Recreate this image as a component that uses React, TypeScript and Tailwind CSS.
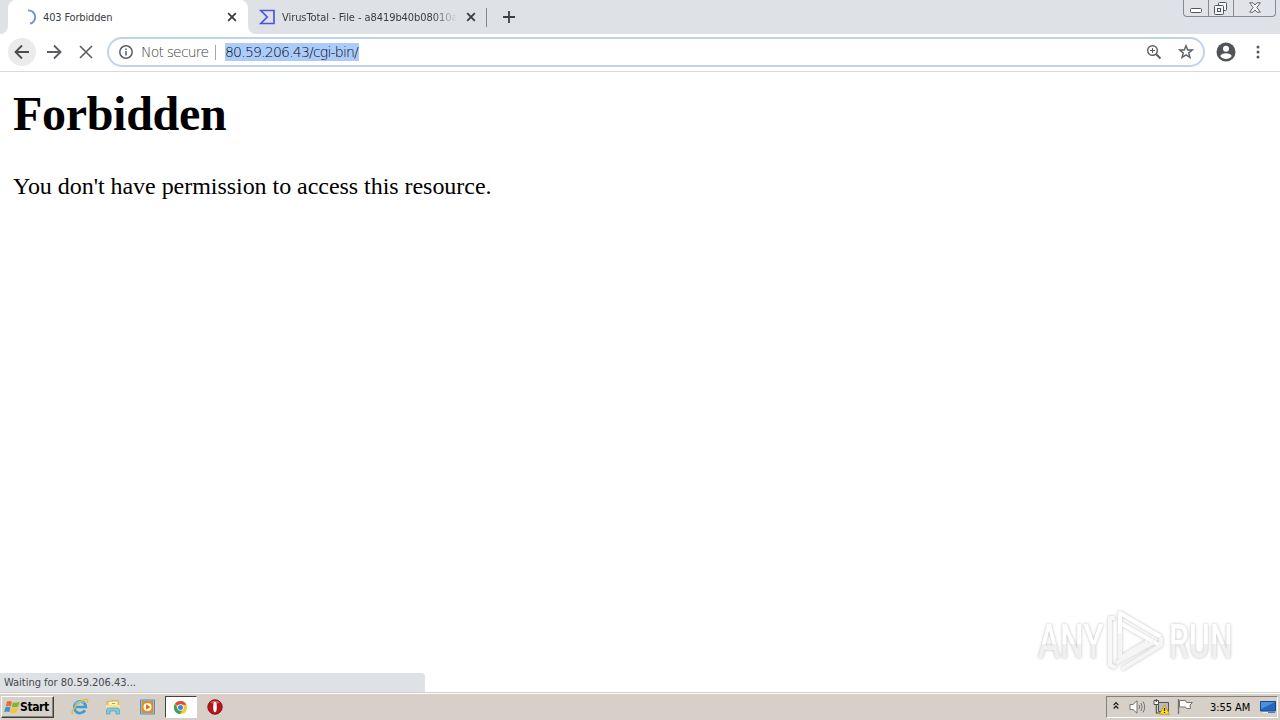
import type { ReactNode } from "react"
import { clsx } from "clsx"

const ui = "font-['DejaVu_Sans_Condensed','DejaVu_Sans',sans-serif] [font-stretch:condensed]"
const omnibox = "font-['DejaVu_Sans_Light','DejaVu_Sans',sans-serif] text-[14px] font-extralight whitespace-nowrap"

function CloseIcon({ className }: { className?: string }) {
  return (
    <svg viewBox="0 0 10 10" className={clsx("shrink-0", className)} fill="none" stroke="currentColor">
      <path d="M1.2 1.2 8.8 8.8M8.8 1.2 1.2 8.8" strokeWidth="1.8" />
    </svg>
  )
}

function TabStrip() {
  return (
    <div className="flex h-[34px] bg-[#dee1e6]">
      <div className="relative ml-2 flex h-full w-60 items-center rounded-t-lg bg-white pr-[11px] pl-[14px] text-[#393c40]">
        <svg viewBox="0 0 8 34" className="absolute bottom-0 -left-2 h-[34px] w-2">
          <path d="M0 34A8 8 0 0 0 8 26V34Z" fill="#fff" />
        </svg>
        <svg viewBox="0 0 8 34" className="absolute -right-2 bottom-0 h-[34px] w-2">
          <path d="M8 34A8 8 0 0 1 0 26V34Z" fill="#fff" />
        </svg>
        <svg viewBox="0 0 16 16" className="h-4 w-4" fill="none">
          <path d="M6 1.3A6.8 6.8 0 0 1 8 14.7" stroke="#6f8fce" strokeWidth="1.8" />
        </svg>
        <span className={clsx(ui, "ml-[5px] flex-1 pt-[2px] text-[11px] tracking-[-0.16px] whitespace-nowrap")}>
          403 Forbidden
        </span>
        <CloseIcon className="h-[10px] w-[10px]" />
      </div>
      <div className="flex w-[239px] items-center pr-[11px] pl-[11px] text-[#393c40]">
        <svg viewBox="0 0 16 16" className="h-4 w-4 shrink-0" fill="none" stroke="#4f54df" strokeWidth="1.7">
          <path d="M1.8 1.5H15V14.5H1.8L8.2 8Z" />
        </svg>
        <span
          className={clsx(
            ui,
            "ml-[7px] w-[175px] pt-[2px] text-[11px] tracking-[-0.07px] whitespace-nowrap [mask-image:linear-gradient(to_right,#000_86%,transparent)]",
          )}
        >
          VirusTotal - File - a8419b40b08010a
        </span>
        <CloseIcon className="ml-[9px] h-[10px] w-[10px]" />
      </div>
      <div className="mt-2 -ml-px h-[19px] w-px bg-[#83868b]" />
      <svg viewBox="0 0 12 12" className="mt-[11px] ml-4 h-3 w-3" stroke="#3c4043" strokeWidth="1.8">
        <path d="M6 0V12M0 6H12" />
      </svg>
      <div className="mr-1 ml-auto flex h-[17px] w-[93px] overflow-hidden rounded-b-[4px] border border-t-0 border-[#858990] bg-[#e1e3e8] text-[#51565e]">
        <div className="flex w-[25px] justify-center border-r border-[#858990]">
          <svg viewBox="0 0 12 5" className="mt-2 h-[5px] w-3" fill="#fff" stroke="currentColor">
            <rect x=".5" y=".5" width="11" height="4" rx="1" />
          </svg>
        </div>
        <div className="flex w-[25px] justify-center border-r border-[#858990]">
          <svg viewBox="0 0 13 13" className="mt-[2px] -ml-px h-[13px] w-[13px]" fill="#f5f6f8" stroke="currentColor">
            <rect x="4.5" y=".5" width="8" height="8" rx="1" />
            <rect x=".5" y="3.5" width="9" height="9" rx="1" />
            <rect x="3.5" y="6.5" width="3" height="3" />
          </svg>
        </div>
        <div className="flex flex-1 justify-center">
          <svg viewBox="0 0 12 11" className="mt-[2px] h-[11px] w-3" fill="#f9fafb" stroke="currentColor" strokeWidth=".9">
            <path d="M.7.8H4L6 3 8 .8H11.3L7.9 5.5 11.3 10.2H8L6 8 4 10.2H.7L4.1 5.5Z" />
          </svg>
        </div>
      </div>
    </div>
  )
}

function Toolbar() {
  return (
    <div className="flex h-[38px] items-center border-b border-[#d8dadd] bg-white pb-px pl-2 text-[#5b5e62]">
      <div className="flex h-7 w-7 items-center justify-center rounded-full bg-[#ebebeb]">
        <svg viewBox="0 0 16 16" className="h-4 w-4" fill="none" stroke="#4a4d50" strokeWidth="1.8">
          <path d="M15 8H2M8 1.5 1.5 8 8 14.5" />
        </svg>
      </div>
      <svg viewBox="0 0 16 16" className="ml-[10px] h-4 w-4" fill="none" stroke="currentColor" strokeWidth="1.9">
        <path d="M1 8H14M8 1.5 14.5 8 8 14.5" />
      </svg>
      <svg viewBox="0 0 14 14" className="ml-[17px] h-[14px] w-[14px]" stroke="currentColor" strokeWidth="1.6">
        <path d="M1 1 13 13M13 1 1 13" />
      </svg>
      <div className="ml-[14px] flex h-[30px] w-[1098px] items-center rounded-full border-2 border-[#c0d2ee] bg-white pl-[10px]">
        <svg viewBox="0 0 14 14" className="h-[14px] w-[14px]" fill="none" stroke="currentColor" strokeWidth="1.5">
          <circle cx="7" cy="7" r="6.2" />
          <path d="M7 6V10.5M7 3.5V5" />
        </svg>
        <span className={clsx(omnibox, "ml-2 w-[67px] tracking-[-0.83px] text-[#3c3f42]")}>Not secure</span>
        <div className="ml-[7px] h-[15px] w-px bg-[#a5a7aa]" />
        <span className={clsx(omnibox, "ml-[9px] h-[18px] w-[134px] bg-[#accbf8] leading-[18px] tracking-[-0.79px] text-[#000818]")}>
          80.59.206.43/cgi-bin/
        </span>
        <svg viewBox="0 0 16 16" className="ml-auto h-4 w-4" fill="none" stroke="currentColor" strokeWidth="1.4">
          <circle cx="6.5" cy="6.5" r="4.8" />
          <path d="M10 10 14.5 14.5" strokeWidth="1.9" />
          <path d="M4 6.5H9M6.5 4V9" strokeWidth="1.1" />
        </svg>
        <svg viewBox="0 0 16 16" className="mr-[9px] ml-4 h-4 w-4" fill="none" stroke="currentColor" strokeWidth="1.4">
          <path d="M8 1.8 9.7 6H14.3L10.7 8.9 12 13.5 8 10.9 4 13.5 5.3 8.9 1.7 6H6.3Z" />
        </svg>
      </div>
      <svg viewBox="0 0 20 20" className="ml-[11px] h-5 w-5">
        <circle cx="10" cy="10" r="9.5" fill="#505357" />
        <circle cx="10" cy="6.8" r="3" fill="#fff" />
        <path d="M4.2 14C5.2 11.9 8 11.3 10 11.3s4.8.6 5.8 2.7A7 7 0 0 1 4.2 14Z" fill="#fff" />
      </svg>
      <svg viewBox="0 0 4 14" className="ml-5 h-[14px] w-1" fill="#55585c">
        <circle cx="2" cy="2" r="1.5" />
        <circle cx="2" cy="7" r="1.5" />
        <circle cx="2" cy="12" r="1.5" />
      </svg>
    </div>
  )
}

function Watermark() {
  return (
    <div className="absolute right-[44px] bottom-[19px] flex h-16 w-[198px] items-center justify-between font-['Roboto',sans-serif] text-[49px] leading-none text-white [filter:drop-shadow(0_0_1.5px_#bdbdbd)]">
      <div className="w-[66px]">
        <span className="inline-block origin-left scale-x-[0.68] bg-linear-to-b from-white from-55% to-[#f0f0f0] to-55% bg-clip-text font-medium text-transparent">
          ANY
        </span>
      </div>
      <svg viewBox="0 0 58 64" className="absolute left-[68px] h-16 w-[58px]" fill="none" strokeWidth="4" strokeLinejoin="round">
        <path d="M9 9H4V56L10 59" stroke="#f8f8f8" />
        <path d="M14 49V4L55 28M14 14 53 36" stroke="#fff" />
        <path d="M14 24V49L42 32M16 60 55 36V28M10 54 48 33" stroke="#f5f5f5" />
      </svg>
      <div className="w-[67px]">
        <span className="inline-block origin-left scale-x-[0.65] bg-linear-to-b from-white from-55% to-[#f0f0f0] to-55% bg-clip-text font-medium text-transparent">
          RUN
        </span>
      </div>
    </div>
  )
}

function QuickButton({ active, children }: { active?: boolean; children: ReactNode }) {
  return (
    <div
      className={clsx(
        "flex h-[22px] w-8 items-center justify-center",
        active && "border border-t-[#424242] border-r-white border-b-white border-l-[#424242] bg-white",
      )}
    >
      {children}
    </div>
  )
}

function Taskbar() {
  return (
    <div className="flex h-7 items-center border-t border-[#d0ccc4] bg-[#d6d0c8] pt-px shadow-[inset_0_1px_0_#fff]">
      <div className="ml-px flex h-[22px] w-[53px] items-center border border-t-white border-r-[#404040] border-b-[#404040] border-l-white pl-[2px] shadow-[inset_-1px_-1px_0_#88847d]">
        <svg viewBox="0 0 16 16" className="h-4 w-4 shrink-0">
          <path d="M3 2.5C5 1.5 6.5 2 8 2.8L6.8 7.4C5 6.6 3.5 6.5 1.8 7.3Z" fill="#ef6a2c" />
          <path d="M9 3.2C11 4.2 13 4 15.5 2.8L14.2 7.5C12 8.5 10 8.5 7.8 7.7Z" fill="#7db72f" />
          <path d="M1.5 8.3C3.2 7.5 5 7.7 6.5 8.4L5.3 13C3.5 12.2 2 12.2.2 13Z" fill="#3b92d6" />
          <path d="M7.5 8.8C9.5 9.7 11.5 9.7 13.9 8.6L12.6 13C10.5 14.2 8 14.2 6.2 13.4Z" fill="#f8c62c" />
        </svg>
        <span className="font-['DejaVu_Sans_Condensed','DejaVu_Sans',sans-serif] text-[12px] font-bold tracking-[-0.4px] text-black">
          Start
        </span>
      </div>
      <div className="ml-[9px] flex gap-[2px]">
        <QuickButton>
          <svg viewBox="0 0 18 18" className="ml-px h-[18px] w-[18px]" fill="none">
            <path d="M14 12.2A5.8 5.8 0 1 1 14.8 9H4" stroke="#3b9bd3" strokeWidth="2.7" />
            <path d="M4 6.5A5.8 5.8 0 0 1 13 5" stroke="#82d0f5" strokeWidth="1.2" />
            <path d="M2.5 15.5C-1.5 16.5 3 8 10 3.5 15-.2 18 .8 16 4.7" stroke="#dfbd4d" strokeWidth="1.5" />
          </svg>
        </QuickButton>
        <QuickButton>
          <svg viewBox="0 0 18 16" className="h-4 w-[18px]">
            <path d="M3 2.5H6.5L7.5 1.5H14.5V10H3Z" fill="#efd47c" stroke="#c5a249" strokeWidth=".6" />
            <path d="M5 3H13V7H5Z" fill="#fff4b4" />
            <path d="M2 6H16V10H2Z" fill="#f6e293" />
            <path d="M2.5 15V11Q2.5 9 5 9H13Q15.5 9 15.5 11V15H12V12H6V15Z" fill="#83c7e3" stroke="#519dbe" strokeWidth=".7" />
            <path d="M8 4.5H11" stroke="#79b373" />
          </svg>
        </QuickButton>
        <QuickButton>
          <svg viewBox="0 0 17 16" className="h-4 w-[17px]">
            <path d="M1.5 1H15.5V15H1.5Z" fill="#a8d2ed" stroke="#5093be" />
            <path d="M3 2.5H14V13.5H3Z" fill="#f48c13" stroke="#d8740b" strokeWidth=".6" />
            <circle cx="8.5" cy="8" r="4" fill="#fff" />
            <path d="M7 5.2 11.5 8 7 10.8Z" fill="#e66d0c" />
          </svg>
        </QuickButton>
        <QuickButton active>
          <svg viewBox="0 0 16 16" className="-ml-px h-[15px] w-[15px]">
            <circle cx="8" cy="8" r="7" fill="#f3c932" />
            <path d="M8 8 2 4.3A7 7 0 0 1 14.2 5H8Z" fill="#df4937" />
            <path d="M2 4.3A7 7 0 0 0 7.5 15L10.6 9.5 5.4 9.5Z" fill="#38a35a" />
            <circle cx="8" cy="8" r="3.5" fill="#fff" />
            <circle cx="8" cy="8" r="2.7" fill="#4285df" />
          </svg>
        </QuickButton>
        <QuickButton>
          <svg viewBox="0 0 16 16" className="-ml-px h-4 w-4">
            <circle cx="8" cy="8" r="7.4" fill="#b91419" />
            <path d="M3 3.5A7 7 0 0 1 13 3.5Q8 6 3 3.5Z" fill="#db565b" />
            <circle cx="8" cy="8" r="7.2" fill="none" stroke="#850e12" strokeWidth=".8" />
            <ellipse cx="8" cy="8" rx="1.8" ry="5.3" fill="#fff" />
          </svg>
        </QuickButton>
      </div>
      <div className="mr-[2px] ml-auto flex h-[22px] w-[172px] items-center border border-t-[#85817b] border-r-white border-b-white border-l-[#85817b] pl-[6px]">
        <svg viewBox="0 0 7 9" className="mb-[3px] h-[9px] w-[6px]" fill="none" stroke="#111" strokeWidth="1.4">
          <path d="M.8 4 3.5 1.2 6.2 4M.8 8 3.5 5.2 6.2 8" />
        </svg>
        <svg viewBox="0 0 17 16" className="ml-[10px] h-4 w-[17px]" fill="none" stroke="#77746f">
          <path d="M1 5.5H4L8 1.8V14.2L4 10.5H1Z" fill="#fff" />
          <path d="M10 6Q11.2 8 10 10M12 4Q14.4 8 12 12M14 2.5Q17.4 8 14 13.5" />
        </svg>
        <svg viewBox="0 0 17 16" className="ml-[7px] h-4 w-[17px]">
          <path d="M5.5 3.5H15.5V12.5H5.5Z" fill="#b8bbb8" stroke="#55534e" />
          <path d="M7 14.5H14" stroke="#55534e" />
          <path d="M1 1.5H5.5V5.5H1Z" fill="#fff" stroke="#4e4b47" />
          <path d="M3.3 0V3M3.3 5.5V14H7" fill="none" stroke="#4e4b47" strokeWidth="1.1" />
          <path d="M11.5 6 16.5 15.3H6.5Z" fill="#ffdc27" stroke="#b58b14" strokeWidth=".7" />
          <path d="M11.5 9V12M11.5 13V14" stroke="#201c0a" strokeWidth="1.2" />
        </svg>
        <svg viewBox="0 0 17 16" className="ml-[7px] h-4 w-[17px]" stroke="#77746f">
          <path d="M1.5 0V15" strokeWidth="1.4" />
          <path d="M2.5 1.5H8.5L9.5 3.5H15.5L13 6 13.5 9.5H9.5L8.5 8H2.5Z" fill="#fff" />
        </svg>
        <span className={clsx(ui, "ml-4 w-[42px] pt-[2px] text-[11px] tracking-[-0.05px] whitespace-nowrap text-black")}>
          3:55 AM
        </span>
        <svg viewBox="0 0 16 14" className="ml-2 h-[14px] w-4">
          <path d="M.5 1.5H15.5V11H.5Z" fill="#2468bd" stroke="#174990" />
          <path d="M1 2H15L1 9Z" fill="#4c91d9" />
          <path d="M3 12.5H8" stroke="#e5f1fc" />
          <path d="M8 12.5H15" stroke="#4a7eb0" />
        </svg>
      </div>
    </div>
  )
}

export default function App() {
  return (
    <div className="flex h-[720px] w-[1280px] flex-col overflow-hidden bg-white">
      <TabStrip />
      <Toolbar />
      <main className="relative flex-1 pl-[13px] font-['Liberation_Serif',serif] text-black">
        <h1 className="pt-[14px] text-[48px] leading-[55px] font-bold tracking-[-0.3px]">Forbidden</h1>
        <p className="mt-[32px] text-[24px] leading-[27px] tracking-[-0.04px]">You don't have permission to access this resource.</p>
        <Watermark />
        <div
          className={clsx(
            ui,
            "absolute bottom-0 left-0 flex h-[19px] w-[425px] items-center rounded-tr-[4px] bg-[#dee1e6] pt-[2px] pl-1 text-[11px] tracking-[-0.02px] text-[#46494d]",
          )}
        >
          Waiting for 80.59.206.43...
        </div>
      </main>
      <Taskbar />
    </div>
  )
}
